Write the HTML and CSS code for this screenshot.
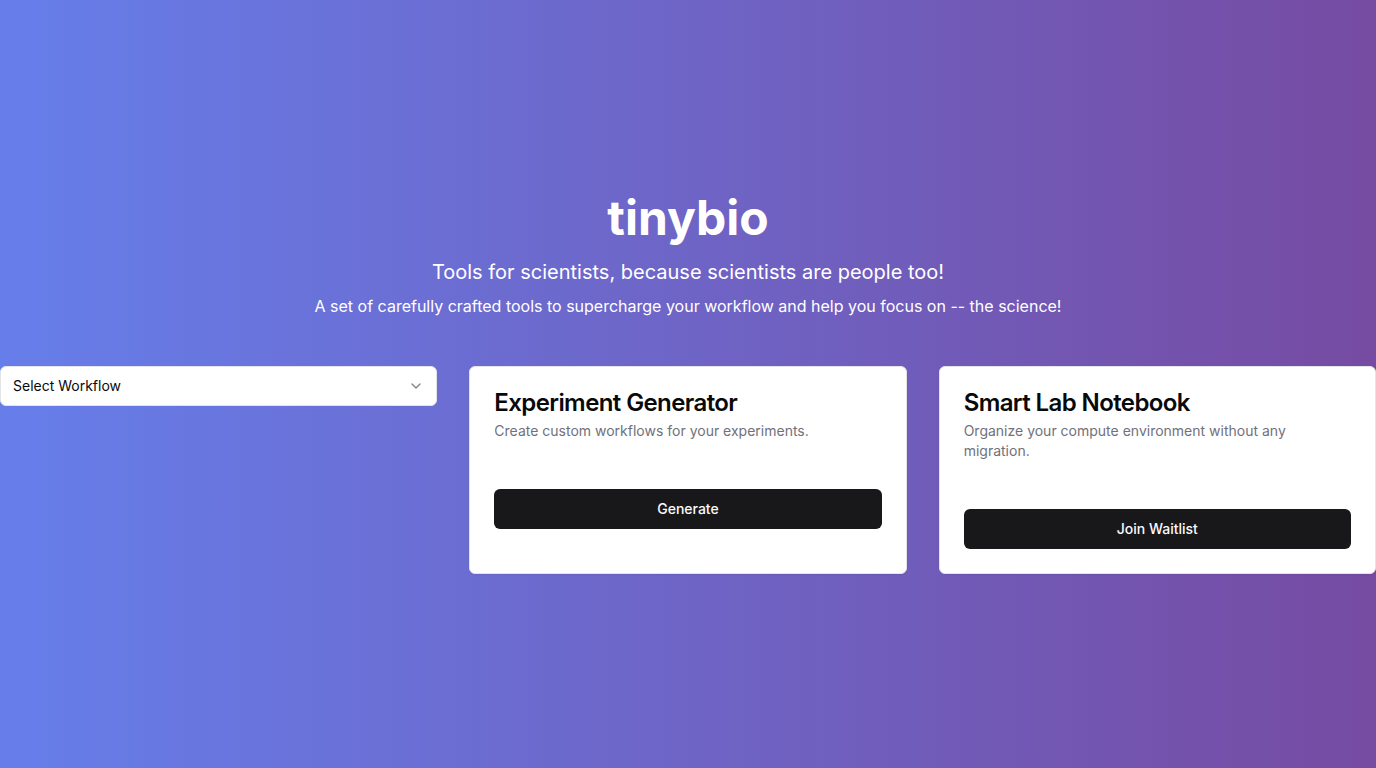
FILE: index.html
```html
<!DOCTYPE html>
<html lang="en">
<head>
<meta charset="utf-8">
<title>tinybio</title>
<link rel="stylesheet" href="styles.css">
</head>
<body>
<main class="page">
  <header class="hero">
    <h1 class="brand">tinybio</h1>
    <p class="tagline">Tools for scientists, because scientists are people too!</p>
    <p class="lead">A set of carefully crafted tools to supercharge your workflow and help you focus on -- the science!</p>
  </header>
  <section class="grid">
    <div class="select-col">
      <button class="select" type="button">
        <span>Select Workflow</span>
        <svg class="chev" width="16" height="16" viewBox="0 0 24 24" fill="none" stroke="currentColor" stroke-width="2" stroke-linecap="round" stroke-linejoin="round"><path d="m6 9 6 6 6-6"/></svg>
      </button>
    </div>
    <div class="card">
      <div class="card-header">
        <h3 class="card-title">Experiment Generator</h3>
        <p class="card-desc">Create custom workflows for your experiments.</p>
      </div>
      <div class="card-content"></div>
      <div class="card-footer"><button class="btn" type="button">Generate</button></div>
    </div>
    <div class="card">
      <div class="card-header">
        <h3 class="card-title">Smart Lab Notebook</h3>
        <p class="card-desc">Organize your compute environment without any migration.</p>
      </div>
      <div class="card-content"></div>
      <div class="card-footer"><button class="btn" type="button">Join Waitlist</button></div>
    </div>
  </section>
</main>
</body>
</html>
```

FILE: styles.css
```css
* { box-sizing: border-box; }
html, body { margin: 0; padding: 0; }
body {
  font-family: Inter, "Noto Sans", sans-serif;
  background: linear-gradient(to right, #667eea, #764ba2);
  min-height: 100vh;
  color: #fff;
}
.page {
  min-height: 100vh;
  display: flex;
  flex-direction: column;
  justify-content: center;
}
.hero { text-align: center; }
.brand {
  margin: 0;
  font-size: 48px;
  line-height: 48px;
  font-weight: 700;
}
.tagline {
  margin: 16px 0 0;
  font-size: 20px;
  line-height: 28px;
}
.lead {
  margin: 8px 0 0;
  font-size: 16px;
  line-height: 24px;
}
.grid {
  margin-top: 48px;
  display: grid;
  grid-template-columns: repeat(3, 1fr);
  gap: 32px;
}
.select {
  width: 100%;
  height: 40px;
  display: flex;
  align-items: center;
  justify-content: space-between;
  padding: 0 12px 2px;
  background: #fff;
  border: 1px solid #e4e4e7;
  border-radius: 6px;
  font-family: inherit;
  font-size: 14px;
  color: #09090b;
  text-align: left;
}
.chev { opacity: 0.5; color: #09090b; margin-top: 2px; }
.card {
  background: #fff;
  border: 1px solid #e4e4e7;
  border-radius: 6px;
  color: #09090b;
  box-shadow: 0 1px 2px rgba(0,0,0,0.05);
}
.card-header {
  padding: 24px;
  display: flex;
  flex-direction: column;
  gap: 6px;
}
.card-title {
  margin: 0;
  font-size: 24px;
  line-height: 24px;
  font-weight: 600;
  letter-spacing: -0.6px;
}
.card-desc {
  margin: 0;
  font-size: 14px;
  line-height: 20px;
  color: #71717a;
}
.card-content { padding: 0 24px 24px; }
.card-footer { padding: 0 24px 24px; }
.btn {
  width: 100%;
  height: 40px;
  border: 0;
  border-radius: 6px;
  background: #18181b;
  color: #fafafa;
  font-family: inherit;
  font-size: 14px;
  font-weight: 500;
  padding: 0 16px 2px;
}
```
